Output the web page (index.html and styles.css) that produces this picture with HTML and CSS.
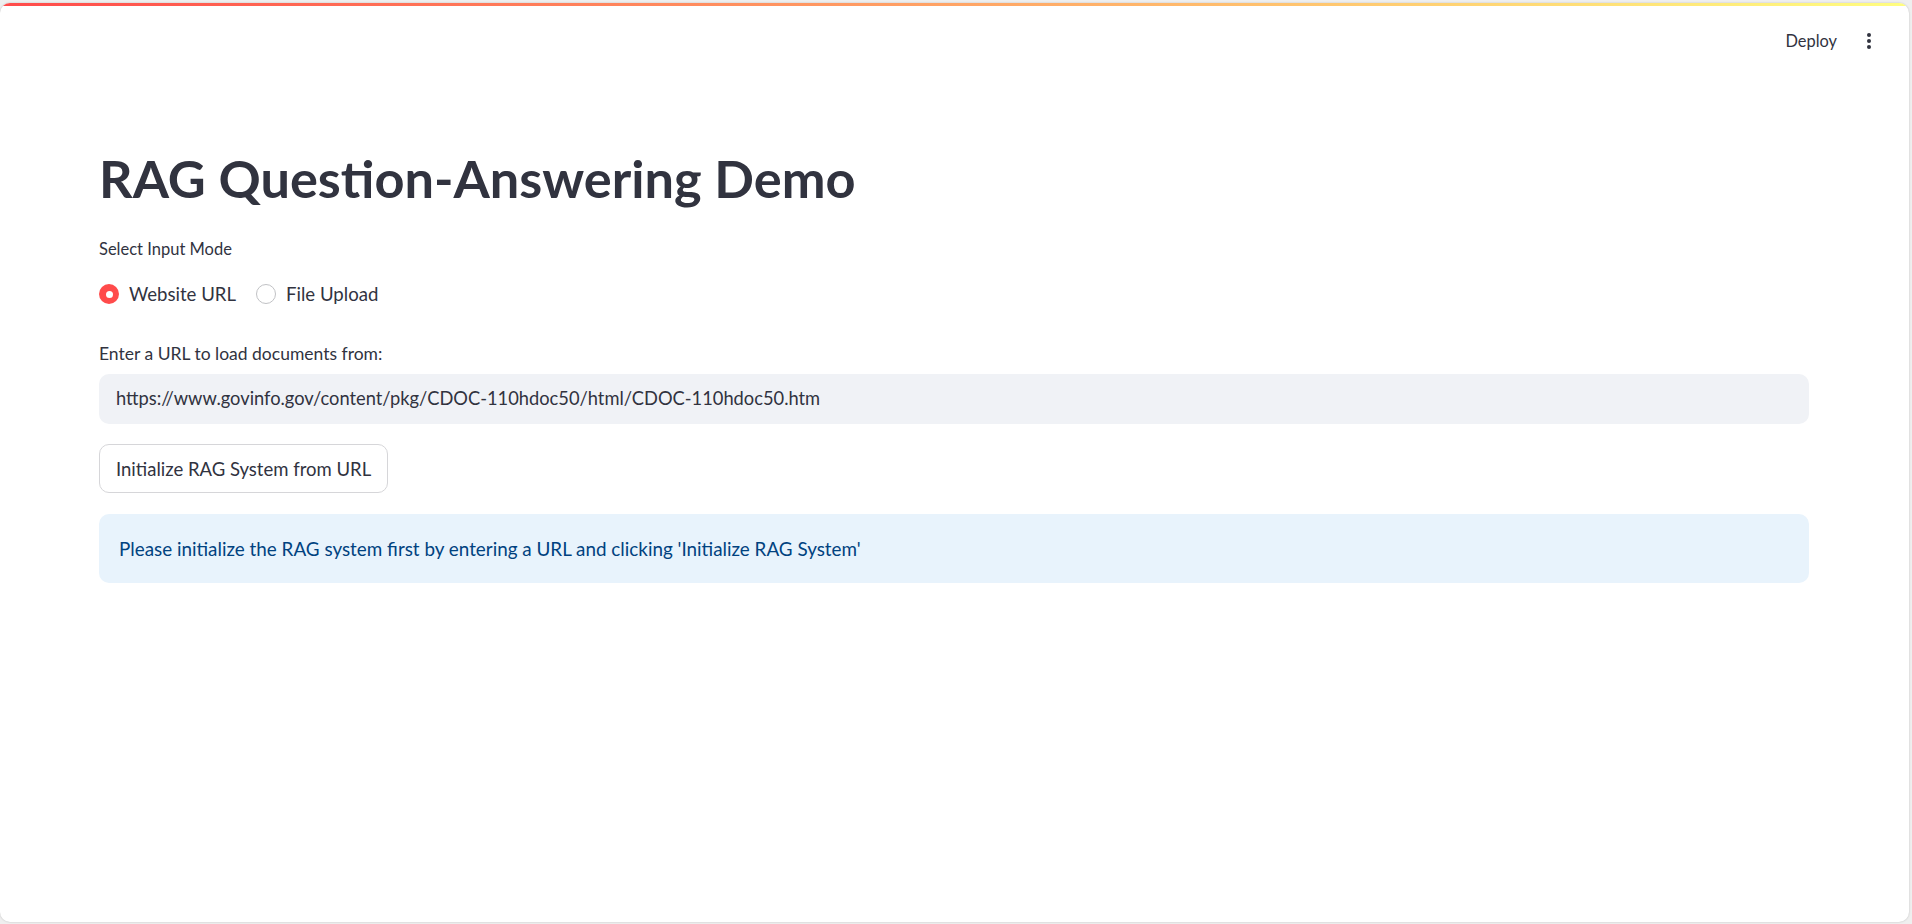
FILE: index.html
```html
<!DOCTYPE html>
<html lang="en">
<head>
<meta charset="utf-8">
<title>RAG Question-Answering Demo</title>
<link rel="stylesheet" href="styles.css">
</head>
<body>
<div class="window">
  <div class="decoration"></div>
  <header class="header">
    <span class="deploy">Deploy</span>
    <span class="kebab" aria-label="Main menu">
      <svg width="16" height="18" viewBox="0 0 16 18"><circle cx="8" cy="3" r="2" fill="#31333f"/><circle cx="8" cy="9" r="2" fill="#31333f"/><circle cx="8" cy="15" r="2" fill="#31333f"/></svg>
    </span>
  </header>
  <main class="main">
    <h1 class="title">RAG Question-Answering Demo</h1>
    <div class="label label-mode">Select Input Mode</div>
    <div class="radio-group">
      <div class="radio-option">
        <span class="radio radio-on"><span class="radio-dot"></span></span>
        <span class="radio-text">Website URL</span>
      </div>
      <div class="radio-option">
        <span class="radio radio-off"></span>
        <span class="radio-text">File Upload</span>
      </div>
    </div>
    <div class="label label-url">Enter a URL to load documents from:</div>
    <div class="input">https://www.govinfo.gov/content/pkg/CDOC-110hdoc50/html/CDOC-110hdoc50.htm</div>
    <div class="button-row"><button class="button">Initialize RAG System from URL</button></div>
    <div class="info">Please initialize the RAG system first by entering a URL and clicking 'Initialize RAG System'</div>
  </main>
</div>
</body>
</html>
```
FILE: styles.css
```css
html, body {
  margin: 0;
  padding: 0;
  height: 100%;
}
body {
  background: #efefef;
  font-family: "Lato", "Open Sans", sans-serif;
  color: #31333f;
  overflow: hidden;
}
.window {
  margin: 3px 3px 0 0;
  height: calc(100vh - 5px);
  background: #ffffff;
  border-radius: 10px;
  overflow: hidden;
  box-shadow: 0 0 2px rgba(0, 0, 0, 0.22);
  display: flex;
  flex-direction: column;
}
.decoration {
  height: 3px;
  flex: none;
  background: linear-gradient(90deg, #ff4b4b, #fffd80);
}
.header {
  height: 70px;
  flex: none;
  display: flex;
  align-items: center;
  justify-content: flex-end;
  gap: 24px;
  padding-right: 32px;
}
.deploy {
  font-size: 16.4px;
  line-height: 20px;
  color: #31333f;
}
.kebab {
  display: flex;
  width: 16px;
  height: 18px;
}
.main {
  padding: 71px 100px 0 99px;
  display: flex;
  flex-direction: column;
}
.title {
  margin: 0;
  font-size: 52.3px;
  line-height: 62px;
  font-weight: 700;
  color: #31333f;
  white-space: nowrap;
}
.label {
  line-height: 20px;
  color: #31333f;
}
.label-mode {
  margin-top: 30px;
  font-size: 16.5px;
}
.radio-group {
  margin-top: 23px;
  display: flex;
  align-items: center;
  gap: 20px;
  height: 24px;
}
.radio-option {
  display: flex;
  align-items: center;
  gap: 10px;
}
.radio {
  width: 20px;
  height: 20px;
  border-radius: 50%;
  box-sizing: border-box;
  display: flex;
  align-items: center;
  justify-content: center;
}
.radio-on {
  background: #ff4b4b;
}
.radio-dot {
  width: 7px;
  height: 7px;
  border-radius: 50%;
  background: #ffffff;
}
.radio-off {
  border: 1px solid #c1c2c5;
  background: #ffffff;
}
.radio-text {
  font-size: 18.6px;
  line-height: 24px;
  color: #31333f;
}
.label-url {
  margin-top: 38px;
  font-size: 17.5px;
}
.input {
  margin-top: 10px;
  height: 50px;
  box-sizing: border-box;
  padding: 0 17px;
  border-radius: 10px;
  background: #f0f2f6;
  font-size: 18.3px;
  line-height: 48px;
  color: #31333f;
  white-space: nowrap;
}
.button-row {
  margin-top: 20px;
  display: flex;
}
.button {
  height: 49px;
  box-sizing: border-box;
  padding: 0 16px;
  border: 1px solid #d6d6d9;
  border-radius: 10px;
  background: #ffffff;
  font-family: "Lato", "Open Sans", sans-serif;
  font-size: 18.5px;
  line-height: 24px;
  color: #31333f;
}
.info {
  margin-top: 21px;
  height: 69px;
  box-sizing: border-box;
  padding: 0 20px;
  border-radius: 10px;
  background: #e8f3fc;
  color: #004280;
  font-size: 18.85px;
  line-height: 69px;
  white-space: nowrap;
}
```
